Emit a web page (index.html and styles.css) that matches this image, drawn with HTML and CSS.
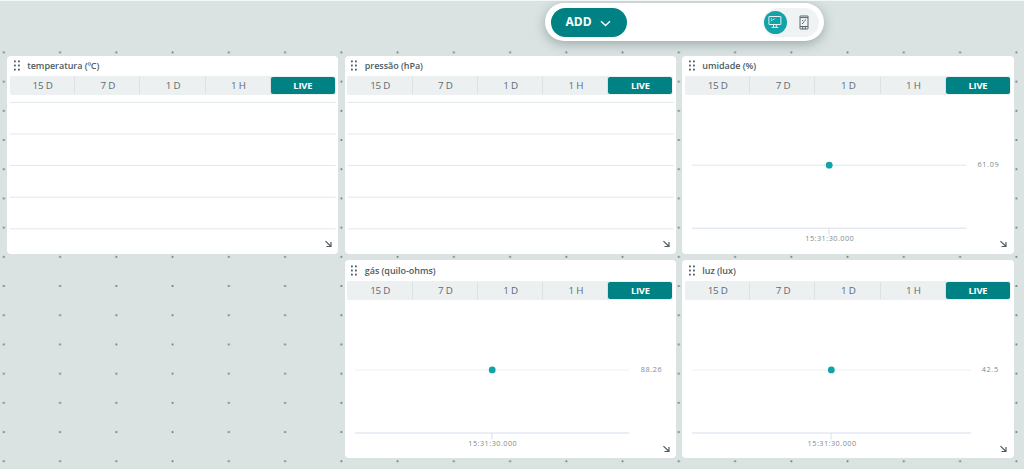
FILE: index.html
```html
<!DOCTYPE html>
<html lang="pt">
<head>
    <meta charset="UTF-8">
    <meta name="viewport" content="width=device-width, initial-scale=1.0">
    <title>Dashboard</title>
    <link rel="stylesheet" href="styles.css">
</head>
<body>

    <!-- shared icons -->
    <svg class="defs" width="0" height="0">
        <symbol id="grip" viewBox="0 0 8 11">
            <g fill="#4e5b61">
                <rect x="1" y="0.5" width="1.8" height="1.8"/><rect x="5" y="0.5" width="1.8" height="1.8"/>
                <rect x="1" y="4.6" width="1.8" height="1.8"/><rect x="5" y="4.6" width="1.8" height="1.8"/>
                <rect x="1" y="8.7" width="1.8" height="1.8"/><rect x="5" y="8.7" width="1.8" height="1.8"/>
            </g>
        </symbol>
        <symbol id="resize" viewBox="0 0 8 8">
            <path d="M1 1.2L6.3 6.3M6.5 2v4.5H2" fill="none" stroke="#4e5b61" stroke-width="1.2"/>
        </symbol>
    </svg>

    <div class="toolbar">
        <button class="add">ADD
            <svg width="11" height="7" viewBox="0 0 11 7"><path d="M1 1.2l4.5 4.3L10 1.2" fill="none" stroke="#fff" stroke-width="1.4"/></svg>
        </button>
        <div class="devices">
            <button class="device active">
                <svg width="14" height="14" viewBox="0 0 14 14" fill="none" stroke="#e4f5f5" stroke-width="1">
                    <rect x="0.9" y="1.5" width="12" height="8" rx="0.3"/>
                    <path d="M5.5 9.5v2.6M8.3 9.5v2.6M3.6 12.4h6.7M3 6.2l1.6-1.6M3 3.8h1M5.2 5l1.5-1.5"/>
                </svg>
            </button>
            <button class="device">
                <svg width="10" height="15" viewBox="0 0 10 15" fill="none" stroke="#5b666b" stroke-width="1">
                    <rect x="1" y="1" width="8" height="13" rx="0.3"/>
                    <path d="M1 2.6h8M1 11.5h8M3.7 11.5V14M6.3 11.5V14M3 5l1.3 1.2M5.2 6.2L7 4.6M3 9l2.2-2.2"/>
                </svg>
            </button>
        </div>
    </div>

    <div class="board">
        <div class="card temperatura">
            <h2><svg class="grip"><use href="#grip"/></svg>temperatura (ºC)</h2>
            <div class="range"><span>15 D</span><span>7 D</span><span>1 D</span><span>1 H</span><span class="live">LIVE</span></div>
            <svg class="chart" viewBox="0 0 331.4 158.7">
                <path class="grid" d="M2.7 7.4h326M2.7 39h326M2.7 70.4h326M2.7 102.2h326M2.7 133.9h326"/>
                <use href="#resize" x="317.5" y="145" width="8" height="8"/>
            </svg>
        </div>

        <div class="card pressao">
            <h2><svg class="grip"><use href="#grip"/></svg>pressão (hPa)</h2>
            <div class="range"><span>15 D</span><span>7 D</span><span>1 D</span><span>1 H</span><span class="live">LIVE</span></div>
            <svg class="chart" viewBox="0 0 331.4 158.7">
                <path class="grid" d="M2.7 7.4h326M2.7 39h326M2.7 70.4h326M2.7 102.2h326M2.7 133.9h326"/>
                <use href="#resize" x="317.5" y="145" width="8" height="8"/>
            </svg>
        </div>

        <div class="card umidade">
            <h2><svg class="grip"><use href="#grip"/></svg>umidade (%)</h2>
            <div class="range"><span>15 D</span><span>7 D</span><span>1 D</span><span>1 H</span><span class="live">LIVE</span></div>
            <svg class="chart" viewBox="0 0 331.4 158.7">
                <path class="grid" d="M9.8 70.2h274.6"/>
                <path class="axis" d="M9.8 133.2h274.6M146.9 133.2v6.5"/>
                <circle cx="147.2" cy="70.2" r="3.4"/>
                <text x="295.4" y="72.5" textLength="21.3">61.09</text>
                <text x="123.3" y="146.3" textLength="48.5">15:31:30.000</text>
                <use href="#resize" x="317.5" y="145" width="8" height="8"/>
            </svg>
        </div>

        <div class="card gas">
            <h2><svg class="grip"><use href="#grip"/></svg>gás (quilo-ohms)</h2>
            <div class="range"><span>15 D</span><span>7 D</span><span>1 D</span><span>1 H</span><span class="live">LIVE</span></div>
            <svg class="chart" viewBox="0 0 331.4 158.7">
                <path class="grid light" d="M9.8 70.1h274.6"/>
                <path class="axis" d="M9.8 133h274.6M146.9 133v6.5"/>
                <circle cx="147.2" cy="69.9" r="3.4"/>
                <text x="295.8" y="72.5" textLength="21">88.26</text>
                <text x="123.3" y="146.3" textLength="48.5">15:31:30.000</text>
                <use href="#resize" x="317.5" y="145" width="8" height="8"/>
            </svg>
        </div>

        <div class="card luz">
            <h2><svg class="grip"><use href="#grip"/></svg>luz (lux)</h2>
            <div class="range"><span>15 D</span><span>7 D</span><span>1 D</span><span>1 H</span><span class="live">LIVE</span></div>
            <svg class="chart" viewBox="0 0 331.4 158.7">
                <path class="grid light" d="M9.8 70.1h279"/>
                <path class="axis" d="M9.8 133h279M149 133v6.5"/>
                <circle cx="149.3" cy="69.9" r="3.4"/>
                <text x="299.8" y="72.5" textLength="16.3">42.5</text>
                <text x="125.6" y="146.3" textLength="48.5">15:31:30.000</text>
                <use href="#resize" x="317.5" y="145" width="8" height="8"/>
            </svg>
        </div>
    </div>

</body>
</html>
```
FILE: styles.css
```css
/* General Reset */
* { margin: 0; padding: 0; box-sizing: border-box; }
body {
    font-family: "Open Sans", sans-serif;
    background: #dae3e2;
    color: #4e5b61;
    height: 469px;
    overflow: hidden;
    border-top: 1px solid #f3f6f6;
}
.defs { display: block; }

/* Floating toolbar */
.toolbar {
    display: flex;
    justify-content: space-between;
    align-items: center;
    width: 279px;
    height: 38px;
    margin: 2.3px 0 0 544.5px;
    padding: 0 4.5px 0 6px;
    background: #fff;
    border-radius: 19px;
    box-shadow: 0 3px 12px rgba(40, 60, 65, 0.35);
}
button { border: none; font-family: inherit; cursor: pointer; }
.add {
    display: flex;
    align-items: center;
    gap: 8px;
    width: 76.5px;
    height: 29px;
    padding: 0 0 1px 15px;
    background: #008184;
    color: #fff;
    font-size: 12px;
    font-weight: 700;
    border-radius: 15px;
}
.add svg { margin-top: 3px; }
.devices {
    display: flex;
    align-items: center;
    gap: 5.5px;
    width: 56.5px;
    height: 29px;
    padding-left: 1px;
    background: #f0f3f4;
    border-radius: 15px;
}
.device {
    display: flex;
    justify-content: center;
    align-items: center;
    width: 23.6px;
    height: 23.6px;
    background: none;
    border-radius: 50%;
}
.device.active { background: #12a2a8; }

/* Dotted board with the widgets */
.board {
    display: grid;
    grid-template-columns: repeat(3, 331.4px);
    grid-template-rows: repeat(2, 198.3px);
    grid-template-areas: "temperatura pressao umidade" ". gas luz";
    gap: 6.2px;
    height: 428px;
    padding: 14.4px 0 0 7.1px;
    background: radial-gradient(circle at 50% 50%, #6f7d7f 0.7px, transparent 1.3px);
    background-size: 56.25px 29.21px;
    background-position: -24.3px -3.2px;
}
.temperatura { grid-area: temperatura; }
.pressao { grid-area: pressao; }
.umidade { grid-area: umidade; }
.gas { grid-area: gas; }
.luz { grid-area: luz; }
.card {
    display: flex;
    flex-direction: column;
    background: #fff;
    border-radius: 4px;
}
.card h2 {
    display: flex;
    align-items: center;
    gap: 6.3px;
    height: 20.5px;
    padding-left: 5.8px;
    font-size: 9px;
    font-weight: 600;
    letter-spacing: -0.04px;
}
.grip { width: 8px; height: 11px; }
.range {
    display: flex;
    height: 19px;
    margin: 0 2.7px;
    padding: 1px 1px 1px 0;
    background: #ecf0f1;
    border-radius: 2px;
}
.range span {
    flex: 1;
    padding-left: 1.4px;
    border-right: 1px solid #dae3e3;
    font-size: 9.8px;
    letter-spacing: -0.2px;
    line-height: 17.6px;
    text-align: center;
    color: #5d6a6f;
}
.range .live {
    flex: 0 0 64px;
    padding: 0;
    background: #008184;
    color: #fff;
    font-size: 9.4px;
    font-weight: 700;
    border: none;
    border-radius: 2px;
}

/* Charts */
.chart { width: 331.4px; height: 158.7px; }
.chart path { fill: none; }
.grid { stroke: #dfe8e8; }
.grid.light { stroke: #edf2f2; }
.axis { stroke: #d5dfee; }
.chart circle { fill: #12a2a8; }
.chart text { font-size: 7.3px; fill: #7f8c8d; }
```
